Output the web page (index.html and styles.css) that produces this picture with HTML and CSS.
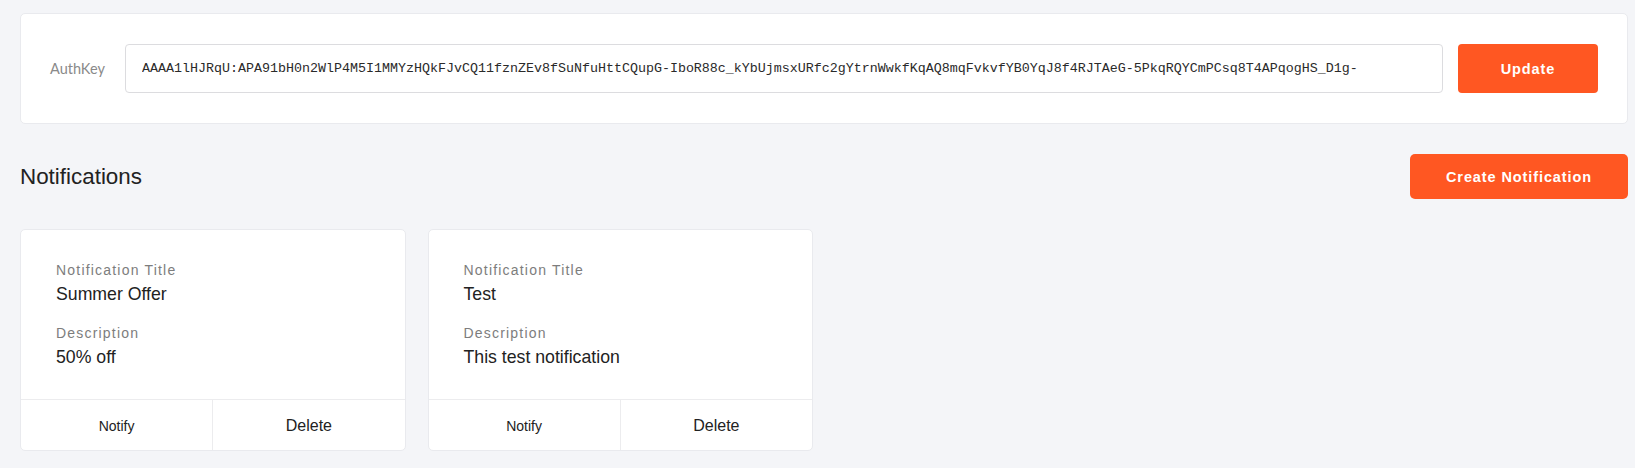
FILE: index.html
```html
<!DOCTYPE html>
<html>
<head>
<meta charset="utf-8">
<link rel="stylesheet" href="styles.css">
</head>
<body>
<div class="page">
  <section class="auth-card">
    <label class="auth-label" for="authkey">AuthKey</label>
    <input class="auth-input" id="authkey" type="text" value="AAAA1lHJRqU:APA91bH0n2WlP4M5I1MMYzHQkFJvCQ11fznZEv8fSuNfuHttCQupG-IboR88c_kYbUjmsxURfc2gYtrnWwkfKqAQ8mqFvkvfYB0YqJ8f4RJTAeG-5PkqRQYCmPCsq8T4APqogHS_D1g-">
    <button class="btn btn-update">Update</button>
  </section>

  <div class="section-head">
    <h2 class="section-title">Notifications</h2>
    <button class="btn btn-create">Create Notification</button>
  </div>

  <div class="cards">
    <div class="card">
      <div class="card-body">
        <div class="field-label">Notification Title</div>
        <div class="field-value">Summer Offer</div>
        <div class="field-label field-gap">Description</div>
        <div class="field-value">50% off</div>
      </div>
      <div class="card-foot">
        <button class="foot-btn foot-notify">Notify</button>
        <button class="foot-btn foot-delete">Delete</button>
      </div>
    </div>
    <div class="card">
      <div class="card-body">
        <div class="field-label">Notification Title</div>
        <div class="field-value">Test</div>
        <div class="field-label field-gap">Description</div>
        <div class="field-value">This test notification</div>
      </div>
      <div class="card-foot">
        <button class="foot-btn foot-notify">Notify</button>
        <button class="foot-btn foot-delete">Delete</button>
      </div>
    </div>
  </div>
</div>
</body>
</html>
```
FILE: styles.css
```css
* { box-sizing: border-box; }
html, body { margin: 0; padding: 0; }
body {
  background: #f4f5f8;
  font-family: "Liberation Sans", Arial, sans-serif;
  color: #222;
}
.page {
  padding: 13px 7px 20px 20px;
}
.auth-card {
  background: #fff;
  border: 1px solid #e9eaee;
  border-radius: 5px;
  padding: 29px;
  display: flex;
  align-items: center;
  height: 111px;
}
.auth-label {
  font-family: Lato, "Liberation Sans", sans-serif;
  font-size: 14.5px;
  color: #8a8a8a;
  width: 55px;
  margin-right: 20px;
  white-space: nowrap;
}
.auth-input {
  flex: 1;
  height: 49px;
  border: 1px solid #dcdcdf;
  border-radius: 4px;
  padding: 0 16px;
  line-height: 26px;
  font-family: "Liberation Mono", "DejaVu Sans Mono", monospace;
  font-size: 13.33px;
  color: #2a2a2a;
  background: #fff;
  outline: none;
  margin-right: 15px;
}
.btn {
  background: #ff5722;
  color: #fff;
  border: none;
  font-family: "Liberation Sans", Arial, sans-serif;
  font-weight: bold;
  font-size: 14.5px;
  letter-spacing: 0.9px;
  cursor: pointer;
}
.btn-update {
  width: 140px;
  height: 49px;
  border-radius: 4px;
}
.section-head {
  display: flex;
  justify-content: space-between;
  align-items: center;
  margin-top: 30px;
}
.section-title {
  margin: 0;
  font-size: 22.4px;
  font-weight: normal;
  color: #222;
}
.btn-create {
  width: 218px;
  height: 45px;
  border-radius: 5px;
}
.cards {
  display: grid;
  grid-template-columns: repeat(4, 1fr);
  gap: 22px;
  margin-top: 30px;
}
.card {
  background: #fff;
  border: 1px solid #e9eaee;
  border-radius: 5px;
  height: 222px;
  display: flex;
  flex-direction: column;
}
.card-body {
  flex: 1;
  padding: 30px 35px 0 35px;
}
.field-label {
  font-size: 14px;
  line-height: 20px;
  letter-spacing: 1.2px;
  color: #7d7d7d;
}
.field-value {
  font-size: 17.7px;
  line-height: 24px;
  margin-top: 2px;
  color: #222;
}
.field-gap {
  margin-top: 16.5px;
}
.card-foot {
  display: flex;
  height: 51px;
  border-top: 1px solid #ececee;
}
.foot-btn {
  flex: 1;
  background: transparent;
  border: none;
  font-family: "Liberation Sans", Arial, sans-serif;
  color: #222;
  cursor: pointer;
  padding: 1px 0 0 0;
}
.foot-notify {
  font-size: 14px;
}
.foot-delete {
  font-size: 16px;
  border-left: 1px solid #ececee;
}
```
